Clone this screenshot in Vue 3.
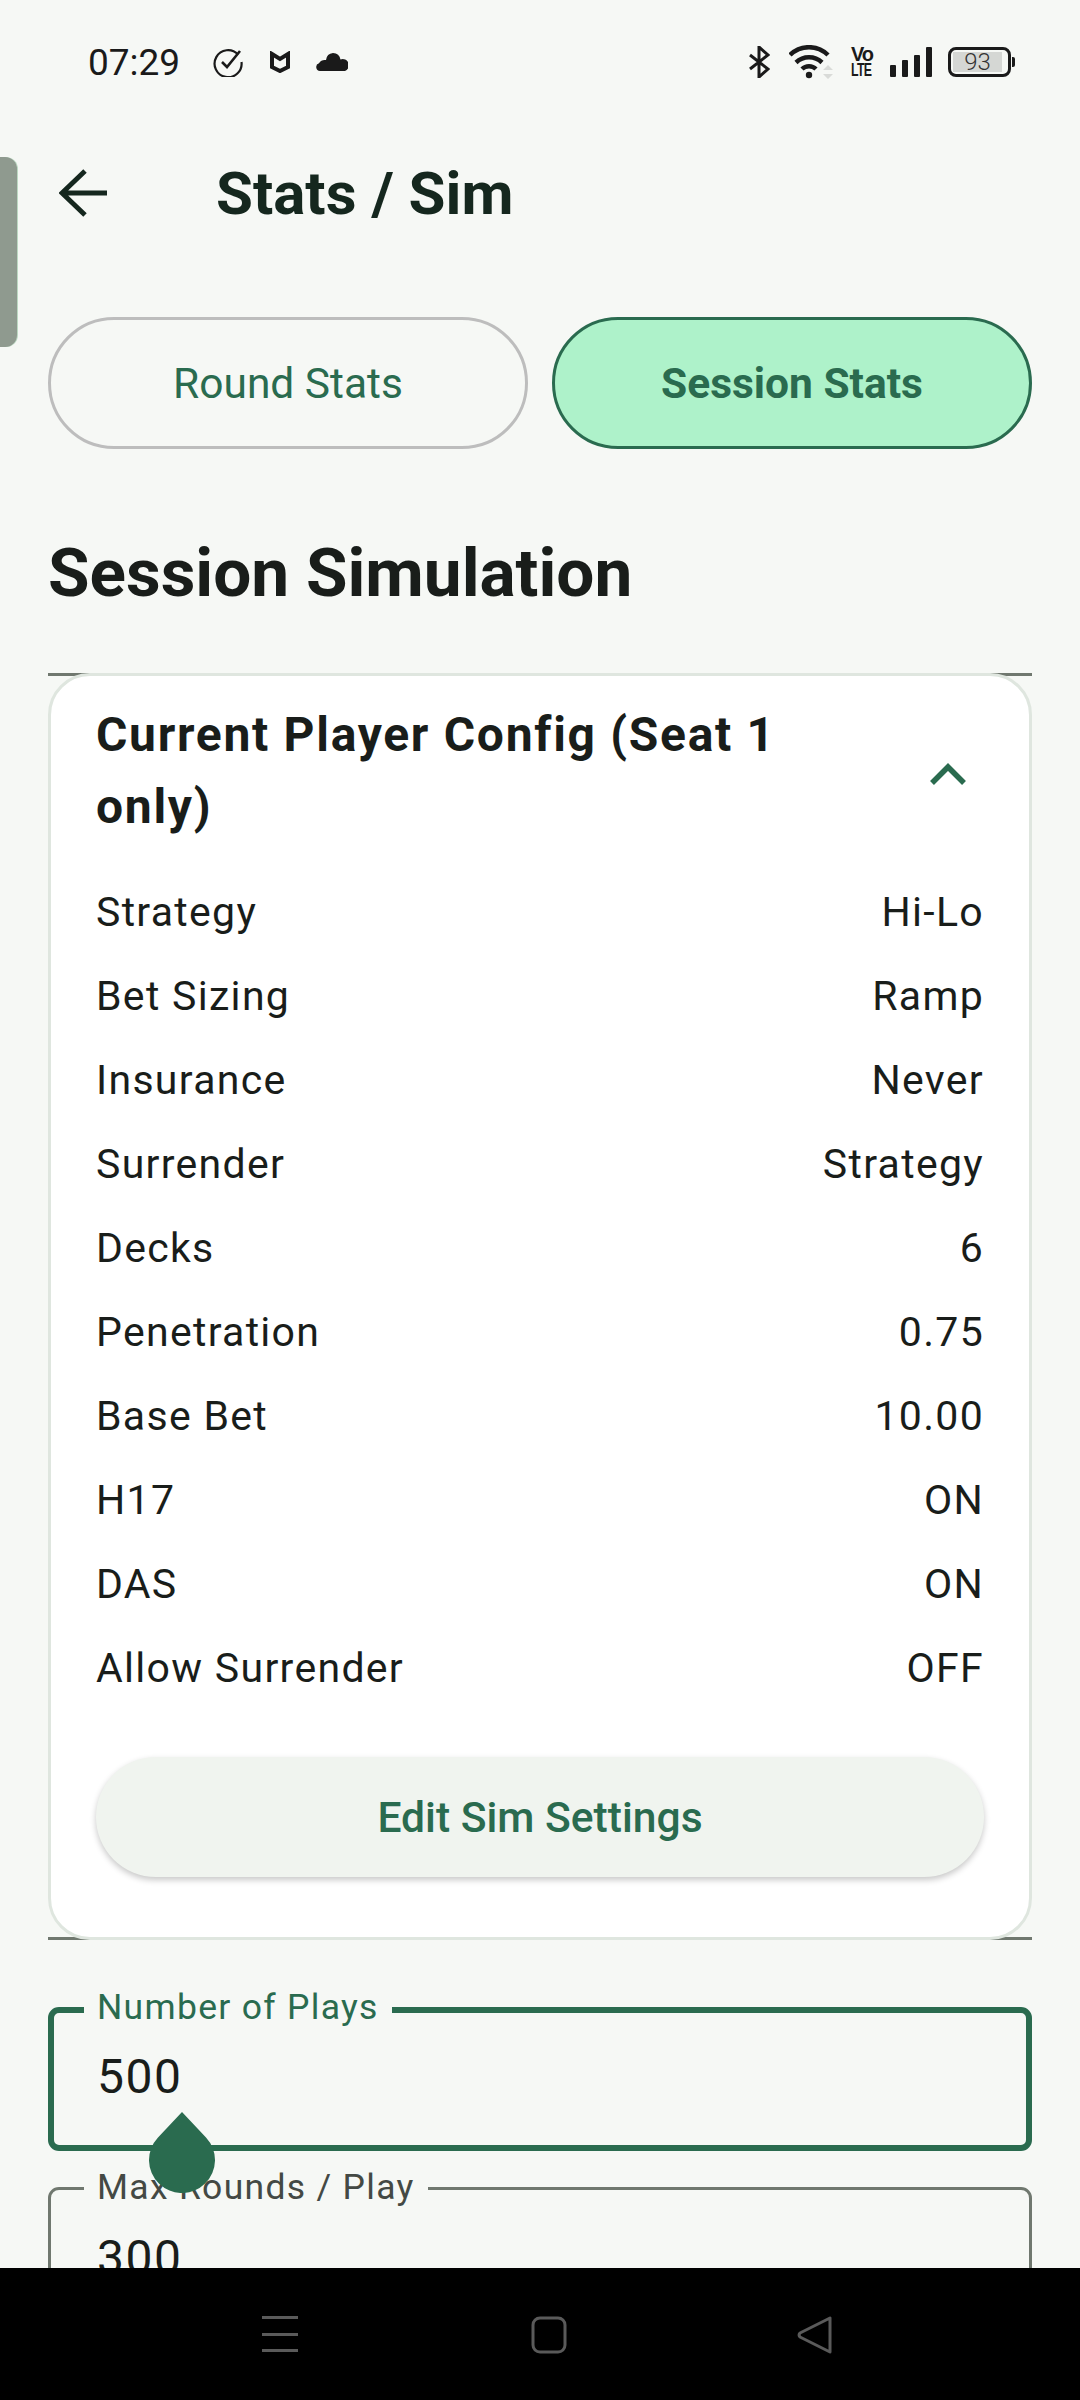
<script setup>
const rows = [
  ['Strategy', 'Hi-Lo'],
  ['Bet Sizing', 'Ramp'],
  ['Insurance', 'Never'],
  ['Surrender', 'Strategy'],
  ['Decks', '6'],
  ['Penetration', '0.75'],
  ['Base Bet', '10.00'],
  ['H17', 'ON'],
  ['DAS', 'ON'],
  ['Allow Surrender', 'OFF']
]
</script>

<template>
  <div class="screen">
    <div class="edge-handle"></div>

    <div class="status-bar">
      <div class="status-left">
        <span class="time">07:29</span>
        <svg class="ic-check" width="30" height="30" viewBox="0 0 30 30" fill="none" stroke="#1a1a1a">
          <path d="M25 7.5A13.5 13.5 0 1 0 28.5 15" stroke-width="2.2" />
          <path d="M9 15l5 5L27 4" stroke-width="2.6" />
        </svg>
        <svg class="ic-shield" width="20" height="22" viewBox="0 0 20 22" fill="none" stroke="#1a1a1a" stroke-width="4">
          <path d="M2 3l8 5 8-5v13l-8 4-8-4z" />
        </svg>
        <svg class="ic-cloud" width="32" height="18" viewBox="0 0 32 18" fill="#1a1a1a">
          <path d="M4 18a4 4 0 0 1-1-7.800 7 7 0 0 1 7-3.200A8 8 0 0 1 17 0a8 8 0 0 1 7.500 6.500A5.500 5.500 0 0 1 29 18z" />
        </svg>
      </div>
      <div class="status-right">
        <svg class="ic-bt" width="21" height="32" viewBox="0 0 21 32" fill="none" stroke="#1a1a1a" stroke-width="3">
          <path d="M1 9l18 14-9 8V1l9 8L1 23" />
        </svg>
        <svg class="ic-wifi" width="44" height="34" viewBox="0 0 44 34" fill="none" stroke="#1a1a1a" stroke-width="4.500">
          <path d="M1 10a27 27 0 0 1 38 0" />
          <path d="M7 17.500a19 19 0 0 1 26 0" />
          <path d="M13 24a10 10 0 0 1 14 0" />
          <circle cx="20" cy="30" r="3.200" fill="#1a1a1a" stroke="none" />
          <path d="M39 20l5 5H34zM39 34l5-5H34z" fill="#d9dbd8" stroke="none" />
        </svg>
        <div class="volte"><span class="vo">Vo</span><span class="lte">LTE</span></div>
        <div class="signal">
          <i style="height: 12px"></i>
          <i style="height: 17px"></i>
          <i style="height: 22px"></i>
          <i style="height: 30px"></i>
        </div>
        <div class="battery">
          <div class="battery-body"><span>93</span></div>
          <div class="battery-tip"></div>
        </div>
      </div>
    </div>

    <div class="content">
      <div class="app-bar">
        <svg class="back" width="48" height="48" viewBox="0 0 48 48" fill="none" stroke="#15271e" stroke-width="5">
          <path d="M48 24H3M26 2L3 24l23 22" />
        </svg>
        <h1>Stats / Sim</h1>
      </div>

      <div class="tabs">
        <div class="tab">Round Stats</div>
        <div class="tab active">Session Stats</div>
      </div>

      <h2>Session Simulation</h2>

      <div class="config-wrap">
        <div class="card">
          <div class="card-head">
            <div class="card-title">Current Player Config (Seat 1 only)</div>
            <svg class="chevron" width="38" height="24" viewBox="0 0 38 24" fill="none" stroke="#2a6b4f" stroke-width="5.500">
              <path d="M3 21L19 5l16 16" />
            </svg>
          </div>
          <div class="rows">
            <div v-for="row in rows" :key="row[0]" class="row">
              <span>{{ row[0] }}</span>
              <span>{{ row[1] }}</span>
            </div>
          </div>
          <div class="edit-btn">Edit Sim Settings</div>
        </div>
      </div>

      <div class="field focused">
        <label>Number of Plays</label>
        <div class="value">500</div>
        <svg class="drop" width="66" height="81" viewBox="0 0 66 81" fill="#2a6b4f">
          <path d="M33 0L57 25.400A33 33 0 1 1 9 25.400z" />
        </svg>
      </div>

      <div class="field">
        <label>Max Rounds / Play</label>
        <div class="value">300</div>
      </div>
    </div>

    <div class="nav-bar">
      <svg width="36" height="36" viewBox="0 0 36 36" fill="#5a5a5a">
        <rect x="0" y="0" width="36" height="3" />
        <rect x="0" y="17" width="36" height="3" />
        <rect x="0" y="33" width="36" height="3" />
      </svg>
      <svg width="36" height="38" viewBox="0 0 36 38" fill="none" stroke="#5a5a5a" stroke-width="3">
        <rect x="2" y="2" width="32" height="34" rx="7" />
      </svg>
      <svg class="nav-back" width="36" height="38" viewBox="0 0 36 38" fill="none" stroke="#5a5a5a" stroke-width="3" stroke-linejoin="round">
        <path d="M33 2v34L3 21a3 3 0 0 1 0-4z" />
      </svg>
    </div>
  </div>
</template>

<style>
html,
body {
  margin: 0;
  background: #f6f8f5;
}
</style>

<style scoped>
.screen {
  position: relative;
  width: 1080px;
  height: 2400px;
  display: flex;
  flex-direction: column;
  overflow: hidden;
  background: #f6f8f5;
  font-family: Roboto, "Noto Sans", sans-serif;
  color: #191d1a;
}

.edge-handle {
  position: absolute;
  left: 0;
  top: 157px;
  width: 17px;
  height: 190px;
  background: #8f9a8f;
  border-radius: 0 12px 12px 0;
  box-shadow: 1px 0 0 #bcd8c2;
}

.status-bar {
  height: 124px;
  flex: none;
  display: flex;
  justify-content: space-between;
  align-items: center;
  padding: 0 65px 0 88px;
  box-sizing: border-box;
}

.status-left,
.status-right {
  display: flex;
  align-items: center;
}

.time {
  font-size: 37px;
  color: #1a1a1a;
  width: 125px;
}

.ic-shield {
  margin-left: 27px;
}

.ic-cloud {
  margin-left: 26px;
}

.ic-wifi {
  margin-left: 19px;
}

.volte {
  margin-left: 18px;
  width: 22px;
  display: flex;
  flex-direction: column;
  align-items: flex-start;
  font-family: "Liberation Sans", sans-serif;
  font-weight: 700;
  color: #1a1a1a;
}

.vo {
  font-size: 20px;
  line-height: 15px;
  letter-spacing: -1px;
}

.lte {
  font-size: 19px;
  line-height: 15px;
  letter-spacing: -1px;
  transform: scaleX(0.65);
  transform-origin: left center;
}

.signal {
  margin-left: 17px;
  display: flex;
  align-items: flex-end;
  gap: 6px;
  height: 30px;
}

.signal i {
  display: block;
  width: 6px;
  border-radius: 1px;
  background: #1a1a1a;
}

.battery {
  margin-left: 16px;
  display: flex;
  align-items: center;
  gap: 1px;
}

.battery-body {
  width: 63px;
  height: 30px;
  box-sizing: border-box;
  border: 3px solid #1a1a1a;
  border-radius: 8px;
  padding: 2px 6px 2px 2px;
  display: flex;
}

.battery-body span {
  flex: 1;
  background: #d5d7d4;
  font-size: 24px;
  font-weight: 300;
  line-height: 20px;
  text-align: center;
  color: #333;
}

.battery-tip {
  width: 3px;
  height: 10px;
  background: #1a1a1a;
  border-radius: 0 2px 2px 0;
}

.content {
  flex: 1;
  min-height: 0;
  overflow: hidden;
  padding: 0 48px;
}

.app-bar {
  height: 138px;
  display: flex;
  align-items: center;
}

.back {
  margin-left: 11px;
}

h1 {
  margin: 0 0 0 109px;
  font-size: 60px;
  font-weight: 700;
  color: #15271e;
}

.tabs {
  margin-top: 55px;
  display: flex;
  gap: 24px;
}

.tab {
  flex: 1;
  height: 132px;
  box-sizing: border-box;
  border: 3px solid #bdbdbd;
  border-radius: 66px;
  display: flex;
  align-items: center;
  justify-content: center;
  font-size: 42.5px;
  color: #2a6b4f;
}

.tab.active {
  background: #aef2ca;
  border-color: #2a6b4f;
  font-weight: 700;
}

h2 {
  margin: 0;
  height: 224px;
  box-sizing: border-box;
  padding-top: 22px;
  display: flex;
  align-items: center;
  font-size: 67.5px;
  font-weight: 700;
  color: #191d1a;
}

.config-wrap {
  border-top: 3px solid #70786f;
  border-bottom: 3px solid #70786f;
}

.card {
  margin: -3px 0;
  padding: 23px 45px 60px 45px;
  background: #fff;
  border: 3px solid #dfe6df;
  border-radius: 42px;
}

.card-head {
  display: flex;
  align-items: center;
  justify-content: space-between;
}

.card-title {
  width: 720px;
  font-size: 48px;
  font-weight: 700;
  line-height: 72px;
  letter-spacing: 1.7px;
}

.chevron {
  margin: 6px 17px 0 0;
}

.rows {
  margin-top: 27px;
}

.row {
  height: 84px;
  display: flex;
  align-items: center;
  justify-content: space-between;
  font-size: 41px;
  letter-spacing: 1.3px;
}

.edit-btn {
  margin-top: 47px;
  height: 120px;
  border-radius: 60px;
  background: #f0f4ef;
  box-shadow: 0 3px 6px rgba(0, 0, 0, 0.22);
  display: flex;
  align-items: center;
  justify-content: center;
  font-size: 42.6px;
  font-weight: 500;
  color: #2a6b4f;
}

.field {
  position: relative;
  height: 144px;
  margin-top: 36px;
  box-sizing: border-box;
  border: 3px solid #70786f;
  border-radius: 11px;
  padding: 38px 46px 0;
}

.config-wrap + .field {
  margin-top: 67px;
}

.field.focused {
  border: 6px solid #2a6b4f;
  padding: 34px 43px 0;
}

.field label {
  position: absolute;
  left: 33px;
  top: -24px;
  padding: 0 13px;
  background: #f6f8f5;
  font-size: 35.5px;
  line-height: 42px;
  letter-spacing: 1.3px;
  color: #444944;
}

.field.focused label {
  left: 30px;
  top: -27px;
  color: #2a6b4f;
}

.value {
  font-size: 48px;
  line-height: 60px;
  letter-spacing: 1.5px;
}

.drop {
  position: absolute;
  left: 95px;
  top: 99px;
  z-index: 1;
}

.nav-bar {
  height: 132px;
  flex: none;
  background: #000;
  display: flex;
  justify-content: center;
  align-items: flex-start;
  gap: 233px;
  padding: 48px 0 0 14px;
  box-sizing: border-box;
}

.nav-back {
  margin-left: -3px;
}
</style>
